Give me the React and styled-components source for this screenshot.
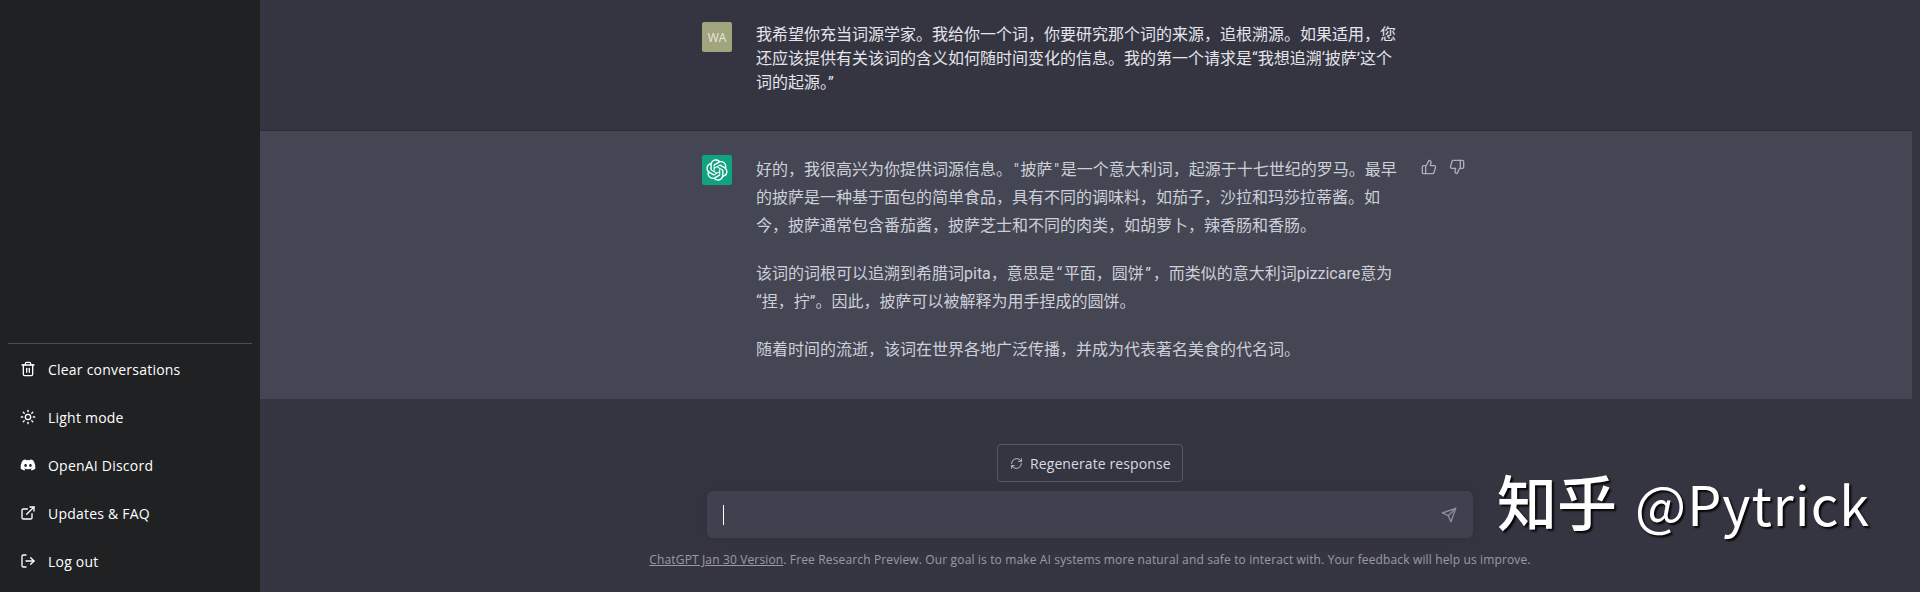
import React from "react";
import styled, { createGlobalStyle } from "styled-components";
import { Trash2, Sun, ExternalLink, LogOut, RefreshCw, ThumbsUp, ThumbsDown } from "lucide-react";
import { FaDiscord } from "react-icons/fa";

const GlobalStyle = createGlobalStyle`
  html, body {
    margin: 0;
    padding: 0;
    background: #343541;
  }
  * {
    box-sizing: border-box;
  }
`;

const Page = styled.div`
  display: flex;
  width: 1920px;
  height: 592px;
  overflow: hidden;
  position: relative;
  font-family: "Open Sans", "Noto Sans CJK SC", sans-serif;
`;

const Sidebar = styled.aside`
  width: 260px;
  flex-shrink: 0;
  background: #202123;
  display: flex;
  flex-direction: column;
  justify-content: flex-end;
  padding: 0 8px 9px;
`;

const Divider = styled.div`
  height: 1px;
  background: rgba(255, 255, 255, 0.2);
  margin-bottom: 3px;
`;

const NavItem = styled.a`
  display: flex;
  align-items: center;
  gap: 12px;
  height: 44px;
  margin-top: ${(props) => (props.$first ? "0" : "4px")};
  padding: 0 12px;
  color: #fff;
  font-size: 14px;
  letter-spacing: 0.22px;
  svg {
    width: 16px;
    height: 16px;
    flex-shrink: 0;
  }
`;

const Main = styled.main`
  flex: 1;
  display: flex;
  flex-direction: column;
  min-width: 0;
`;

const Conversation = styled.div`
  flex: 1;
  padding-right: 8px;
`;

const Row = styled.div`
  background: ${(props) => (props.$ai ? "#444654" : "#343541")};
  height: ${(props) => (props.$ai ? "268px" : "131px")};
  padding-top: ${(props) => (props.$ai ? "24px" : "22px")};
  border-bottom: ${(props) => (props.$ai ? "none" : "1px solid rgba(32, 33, 35, 0.5)")};
`;

const RowInner = styled.div`
  width: 768px;
  margin: 0 auto;
  display: flex;
`;

const Avatar = styled.div`
  width: 30px;
  height: 30px;
  flex-shrink: 0;
  margin-right: 24px;
  border-radius: 2px;
  display: flex;
  align-items: center;
  justify-content: center;
  background: ${(props) => (props.$ai ? "#10a37f" : "#a0a57e")};
  color: #e8e8dc;
  font-size: 12px;
  font-weight: 500;
`;

const UserText = styled.div`
  width: 650px;
  padding-top: 1px;
  color: #e4e4ea;
  font-size: 16px;
  line-height: 24px;
  font-family: "Roboto", "Noto Sans CJK SC", sans-serif;
`;

const AiText = styled.div`
  width: 650px;
  flex-shrink: 0;
  padding-top: 1px;
  color: #cdd0d7;
  font-size: 16px;
  line-height: 28px;
  font-family: "Roboto", "Noto Sans CJK SC", sans-serif;
`;

const Para = styled.p`
  margin: 0 0 20px;
`;

const Feedback = styled.div`
  display: flex;
  gap: 12px;
  margin: 4px 0 0 15px;
  height: 16px;
  color: #acacbe;
  svg {
    width: 16px;
    height: 16px;
  }
`;

const Composer = styled.div`
  display: flex;
  flex-direction: column;
  align-items: center;
`;

const RegenButton = styled.button`
  display: flex;
  align-items: center;
  gap: 7px;
  width: 186px;
  height: 38px;
  padding: 0 12px;
  margin-bottom: 9px;
  background: #343541;
  border: 1px solid #565869;
  border-radius: 4px;
  color: #d9d9e3;
  font-family: inherit;
  font-size: 14px;
  letter-spacing: 0.1px;
  white-space: nowrap;
  svg {
    width: 13px;
    height: 13px;
    flex-shrink: 0;
    stroke-width: 1.5;
  }
`;

const InputBox = styled.div`
  width: 766px;
  height: 47px;
  display: flex;
  align-items: center;
  justify-content: space-between;
  padding: 0 16px 0 16px;
  background: #40414f;
  border-radius: 6px;
  box-shadow: 0 0 15px rgba(0, 0, 0, 0.1);
  color: #8e8ea0;
`;

const Caret = styled.span`
  width: 1px;
  height: 20px;
  background: #fff;
`;

const Footnote = styled.div`
  height: 54px;
  padding-top: 13px;
  font-size: 12px;
  line-height: 18px;
  color: rgba(255, 255, 255, 0.5);
  letter-spacing: 0.14px;
  a {
    color: inherit;
    text-decoration: underline;
  }
`;

const Watermark = styled.div`
  position: absolute;
  left: 1497px;
  top: 462px;
  color: #fff;
  font-family: "Noto Sans CJK SC", sans-serif;
  font-size: 54px;
  line-height: 76px;
  letter-spacing: 1px;
  white-space: pre;
  text-shadow: 2px 2px 2px rgba(0, 0, 0, 0.9);
`;

const WatermarkBrand = styled.span`
  font-size: 60px;
  font-weight: 500;
  letter-spacing: 0;
  margin-right: 5px;
`;

const SendIcon = () => (
  <svg width="16" height="16" viewBox="0 0 24 24" fill="none" stroke="currentColor" strokeWidth="2" strokeLinecap="round" strokeLinejoin="round">
    <line x1="22" y1="2" x2="11" y2="13" />
    <polygon points="22 2 15 22 11 13 2 9 22 2" />
  </svg>
);

const OpenAILogo = () => (
  <svg width="22" height="22" viewBox="0 0 41 41" fill="none">
    <path
      fill="#fff"
      d="M37.5324 16.8707C37.9808 15.5241 38.1363 14.0974 37.9886 12.6859C37.8409 11.2744 37.3934 9.91076 36.676 8.68622C35.6126 6.83404 33.9882 5.3676 32.0373 4.4985C30.0864 3.62941 27.9098 3.40259 25.8215 3.85078C24.8796 2.7893 23.7219 1.94125 22.4257 1.36341C21.1295 0.785575 19.7249 0.491269 18.3058 0.500197C16.1708 0.495044 14.0893 1.16803 12.3614 2.42214C10.6335 3.67624 9.34853 5.44666 8.6917 7.47815C7.30085 7.76286 5.98686 8.3414 4.8377 9.17505C3.68854 10.0087 2.73073 11.0782 2.02839 12.312C0.956464 14.1591 0.498905 16.2988 0.721698 18.4228C0.944492 20.5467 1.83612 22.5449 3.268 24.1293C2.81966 25.4759 2.66413 26.9026 2.81182 28.3141C2.95951 29.7256 3.40701 31.0892 4.12437 32.3138C5.18791 34.1659 6.8123 35.6322 8.76321 36.5013C10.7141 37.3704 12.8907 37.5973 14.9789 37.1492C15.9208 38.2107 17.0786 39.0587 18.3747 39.6366C19.6709 40.2144 21.0755 40.5087 22.4946 40.4998C24.6307 40.5054 26.7133 39.8321 28.4418 38.5772C30.1704 37.3223 31.4556 35.5506 32.1119 33.5179C33.5027 33.2332 34.8167 32.6547 35.9659 31.821C37.115 30.9874 38.0728 29.9178 38.7752 28.684C39.8458 26.8371 40.3023 24.6979 40.0789 22.5748C39.8556 20.4517 38.9639 18.4544 37.5324 16.8707ZM22.4978 37.8849C20.7443 37.8874 19.0459 37.2733 17.6994 36.1501C17.7601 36.117 17.8666 36.0586 17.936 36.0161L25.9004 31.4156C26.1003 31.3019 26.2663 31.137 26.3813 30.9378C26.4964 30.7386 26.5563 30.5124 26.5549 30.2825V19.0542L29.9213 20.998C29.9389 21.0068 29.9541 21.0198 29.9656 21.0359C29.977 21.052 29.9842 21.0707 29.9867 21.0902V30.3889C29.9842 32.375 29.1946 34.2791 27.7909 35.6841C26.3872 37.0892 24.4838 37.8806 22.4978 37.8849ZM6.39227 31.0064C5.51397 29.4888 5.19742 27.7107 5.49804 25.9832C5.55718 26.0187 5.66048 26.0818 5.73461 26.1244L13.699 30.7248C13.8975 30.8408 14.1233 30.902 14.3532 30.902C14.583 30.902 14.8088 30.8408 15.0073 30.7248L24.731 25.1103V28.9979C24.7321 29.0177 24.7283 29.0376 24.7199 29.0556C24.7115 29.0736 24.6988 29.0893 24.6829 29.1012L16.6317 33.7497C14.9096 34.7416 12.8643 35.0097 10.9447 34.4954C9.02506 33.9811 7.38785 32.7263 6.39227 31.0064ZM4.29707 13.6194C5.17156 12.0998 6.55279 10.9364 8.19885 10.3327C8.19885 10.4013 8.19491 10.5228 8.19491 10.6071V19.808C8.19351 20.0378 8.25334 20.2638 8.36823 20.4629C8.48312 20.6619 8.64893 20.8267 8.84863 20.9404L18.5723 26.5542L15.206 28.4979C15.1894 28.5089 15.1703 28.5155 15.1505 28.5173C15.1307 28.5191 15.1107 28.516 15.0924 28.5082L7.04046 23.8557C5.32135 22.8601 4.06716 21.2235 3.55289 19.3046C3.03862 17.3858 3.30624 15.3413 4.29707 13.6194ZM31.955 20.0556L22.2312 14.4411L25.5976 12.4981C25.6142 12.4872 25.6333 12.4805 25.6531 12.4787C25.6729 12.4769 25.6928 12.4801 25.7111 12.4879L33.7631 17.1364C34.9967 17.849 36.0017 18.8982 36.6606 20.1613C37.3194 21.4244 37.6047 22.849 37.4832 24.2684C37.3617 25.6878 36.8382 27.0432 35.9743 28.1759C35.1103 29.3086 33.9415 30.1717 32.6047 30.6641C32.6047 30.5947 32.6047 30.4733 32.6047 30.3889V21.188C32.6066 20.9586 32.5474 20.7328 32.4332 20.5338C32.319 20.3348 32.154 20.1698 31.955 20.0556ZM35.3055 15.0128C35.2464 14.9765 35.1431 14.9142 35.069 14.8717L27.1045 10.2712C26.906 10.1554 26.6803 10.0943 26.4504 10.0943C26.2206 10.0943 25.9948 10.1554 25.7963 10.2712L16.0726 15.8858V11.9982C16.0715 11.9783 16.0753 11.9585 16.0837 11.9405C16.0921 11.9225 16.1048 11.9068 16.1207 11.8949L24.1719 7.25025C25.4053 6.53903 26.8158 6.19376 28.2383 6.25482C29.6608 6.31589 31.0364 6.78077 32.2044 7.59508C33.3723 8.40939 34.2842 9.53945 34.8334 10.8531C35.3826 12.1667 35.5464 13.6095 35.3055 15.0128ZM14.2424 21.9419L10.8752 19.9981C10.8576 19.9893 10.8423 19.9763 10.8309 19.9602C10.8195 19.9441 10.8122 19.9254 10.8098 19.9058V10.6071C10.8107 9.18295 11.2173 7.78848 11.9819 6.58696C12.7466 5.38544 13.8377 4.42659 15.1275 3.82264C16.4173 3.21869 17.8524 2.99464 19.2649 3.1767C20.6775 3.35876 22.0089 3.93941 23.1034 4.85067C23.0427 4.88379 22.937 4.94215 22.8668 4.98473L14.9024 9.58517C14.7025 9.69878 14.5366 9.86356 14.4215 10.0626C14.3065 10.2616 14.2466 10.4877 14.2479 10.7175L14.2424 21.9419ZM16.071 17.9991L20.4018 15.4978L24.7325 17.9975V22.9985L20.4018 25.4983L16.071 22.9985V17.9991Z"
    />
  </svg>
);

const navItems = [
  { label: "Clear conversations", icon: <Trash2 /> },
  { label: "Light mode", icon: <Sun /> },
  { label: "OpenAI Discord", icon: <FaDiscord /> },
  { label: "Updates & FAQ", icon: <ExternalLink /> },
  { label: "Log out", icon: <LogOut /> },
];

const App = () => {
  return (
    <Page>
      <GlobalStyle />
      <Sidebar>
        <Divider />
        {navItems.map((item, i) => (
          <NavItem key={item.label} $first={i === 0}>
            {item.icon}
            {item.label}
          </NavItem>
        ))}
      </Sidebar>
      <Main>
        <Conversation>
          <Row>
            <RowInner>
              <Avatar>WA</Avatar>
              <UserText>
                我希望你充当词源学家。我给你一个词，你要研究那个词的来源，追根溯源。如果适用，您还应该提供有关该词的含义如何随时间变化的信息。我的第一个请求是“我想追溯‘披萨’这个词的起源。”
              </UserText>
            </RowInner>
          </Row>
          <Row $ai>
            <RowInner>
              <Avatar $ai>
                <OpenAILogo />
              </Avatar>
              <AiText>
                <Para>
                  好的，我很高兴为你提供词源信息。&#8202;"&#8202;披萨&#8202;"&#8202;是一个意大利词，起源于十七世纪的罗马。最早的披萨是一种基于面包的简单食品，具有不同的调味料，如茄子，沙拉和玛莎拉蒂酱。如今，披萨通常包含番茄酱，披萨芝士和不同的肉类，如胡萝卜，辣香肠和香肠。
                </Para>
                <Para>
                  该词的词根可以追溯到希腊词pita，意思是&#8202;“&#8202;平面，圆饼&#8202;”&#8202;，而类似的意大利词pizzicare意为
                  <br />
                  “捏，拧”。因此，披萨可以被解释为用手捏成的圆饼。
                </Para>
                <Para>随着时间的流逝，该词在世界各地广泛传播，并成为代表著名美食的代名词。</Para>
              </AiText>
              <Feedback>
                <ThumbsUp />
                <ThumbsDown />
              </Feedback>
            </RowInner>
          </Row>
        </Conversation>
        <Composer>
          <RegenButton>
            <RefreshCw />
            Regenerate response
          </RegenButton>
          <InputBox>
            <Caret />
            <SendIcon />
          </InputBox>
          <Footnote>
            <a>ChatGPT Jan 30 Version</a>. Free Research Preview. Our goal is to make AI systems more natural and safe to interact with. Your feedback will help us improve.
          </Footnote>
        </Composer>
      </Main>
      <Watermark>
        <WatermarkBrand>知乎</WatermarkBrand> @Pytrick
      </Watermark>
    </Page>
  );
};

export default App;
